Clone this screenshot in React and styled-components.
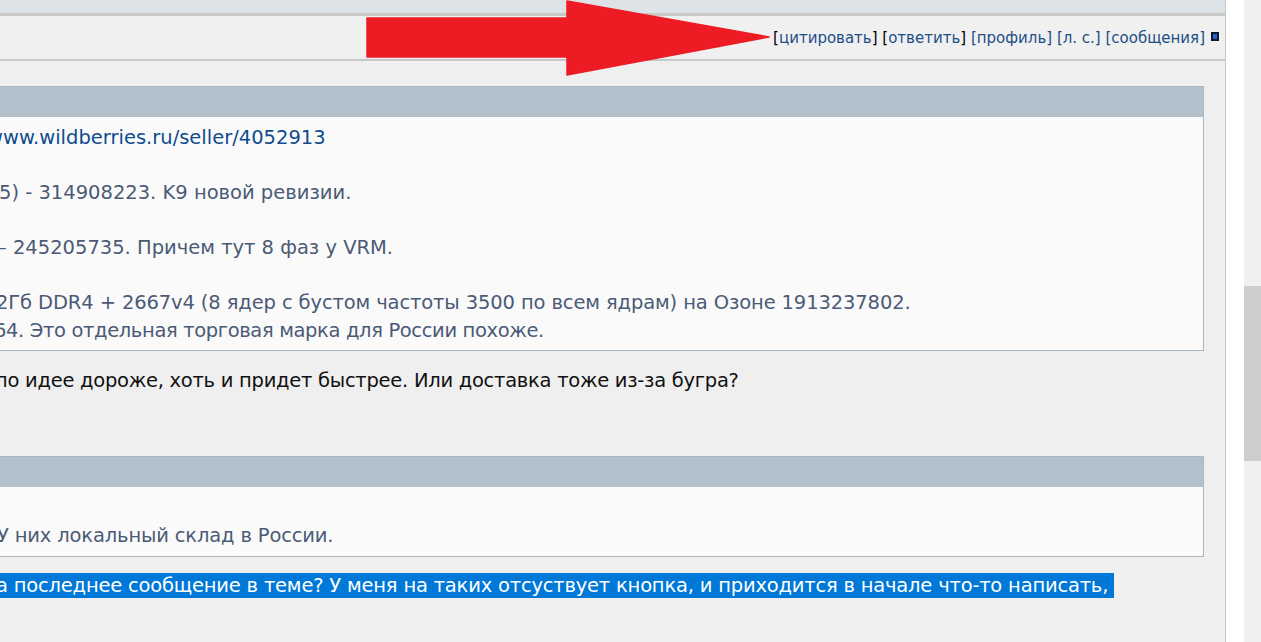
import React from "react";
import styled, { createGlobalStyle } from "styled-components";

const Global = createGlobalStyle`
  html, body { margin: 0; padding: 0; background: #ffffff; }
  body { font-family: "DejaVu Sans", Verdana, sans-serif; overflow: hidden; }
`;

const Page = styled.div`
  display: flex;
  width: 1261px;
  height: 642px;
  overflow: hidden;
`;

const Main = styled.div`
  position: relative;
  box-sizing: border-box;
  width: 1226px;
  flex: none;
  display: flex;
  flex-direction: column;
  background: #efefef;
  border-right: 1px solid #c8c8c8;
  overflow: hidden;
`;

const TopBand = styled.div`
  height: 13px;
  background: #dee3e7;
  flex: none;
`;

const ActionBar = styled.div`
  flex: none;
  box-sizing: border-box;
  height: 48px;
  background: #f0f0f0;
  border-top: 3px solid #c8c8c8;
  border-bottom: 2px solid #c8c8c8;
  display: flex;
  align-items: center;
  justify-content: flex-end;
  padding-right: 6px;
`;

const Links = styled.span`
  font-size: 15px;
  color: #000;
  white-space: pre;
`;

const ActLink = styled.span`
  color: #1d4f86;
`;

const Square = styled.span`
  display: inline-block;
  flex: none;
  box-sizing: border-box;
  width: 8px;
  height: 9px;
  margin-left: 6px;
  margin-top: -2px;
  background: #2f5fc4;
  border: 2px solid #0c1a30;
`;

const Content = styled.div`
  padding: 25px 21px 0 0;
  display: flex;
  flex-direction: column;
`;

const Quote = styled.div`
  margin-left: -40px;
  border: 1px solid #a9b7c3;
  background: #fafafa;
`;

const QuoteHead = styled.div`
  height: 30px;
  background: #b3c1cc;
`;

const QuoteBody = styled.div`
  padding: ${(p) => p.$pad};
  padding-left: 40px;
  font-size: 19.5px;
  line-height: 27.5px;
  color: #4b5a76;
  white-space: pre;
`;

const Line = styled.div`
  height: 27.5px;
  text-indent: ${(p) => p.$shift || 0}px;
  letter-spacing: ${(p) => p.$ls || 0}px;
  white-space: pre;
`;

const Link = styled.span`
  color: #0f4c8e;
`;

const Reply = styled.div`
  margin: ${(p) => p.$m};
  font-size: 19.5px;
  line-height: 28px;
  color: #111;
  white-space: pre;
  text-indent: ${(p) => p.$shift}px;
  letter-spacing: ${(p) => p.$ls || 0}px;
`;

const Selected = styled.span`
  background: #0078d7;
  color: #ffffff;
  padding: 1px 0;
`;

const Gutter = styled.div`
  width: 18px;
  flex: none;
  background: #ffffff;
`;

const Scrollbar = styled.div`
  width: 17px;
  flex: none;
  background: #f0f0f0;
  display: flex;
  flex-direction: column;
`;

const Thumb = styled.div`
  margin-top: 286px;
  height: 175px;
  background: #cdcdcd;
`;

const Arrow = styled.svg`
  position: absolute;
  left: 364px;
  top: 0;
`;

export default function App() {
  return (
    <>
      <Global />
      <Page>
        <Main>
          <TopBand />
          <ActionBar>
            <Links>
              {"["}<ActLink>цитировать</ActLink>{"] ["}<ActLink>ответить</ActLink>{"] "}
              <ActLink>[профиль]</ActLink>{" "}
              <ActLink>[л. с.]</ActLink>{" "}
              <ActLink>[сообщения]</ActLink>
            </Links>
            <Square />
          </ActionBar>
          <Content>
            <Quote>
              <QuoteHead />
              <QuoteBody $pad="7px 0 6px">
                <Line $shift={-14}><Link>www.wildberries.ru/seller/4052913</Link></Line>
                <Line />
                <Line $shift={-2}>5) - 314908223. K9 новой ревизии.</Line>
                <Line />
                <Line $shift={-4}>– 245205735. Причем тут 8 фаз у VRM.</Line>
                <Line />
                <Line $shift={-5} $ls={-0.12}>2Гб DDR4 + 2667v4 (8 ядер с бустом частоты 3500 по всем ядрам) на Озоне 1913237802.</Line>
                <Line $shift={-7} $ls={-0.36}>64. Это отдельная торговая марка для России похоже.</Line>
              </QuoteBody>
            </Quote>
            <Reply $m="16px 0 61px" $shift={-5} $ls={-0.27}>по идее дороже, хоть и придет быстрее. Или доставка тоже из-за бугра?</Reply>
            <Quote>
              <QuoteHead />
              <QuoteBody $pad="7px 0 7px">
                <Line />
                <Line $shift={-4} $ls={-0.16}>У них локальный склад в России.</Line>
              </QuoteBody>
            </Quote>
            <Reply $m="15px 0 0" $shift={-4} $ls={-0.2}>
              <Selected>а последнее сообщение в теме? У меня на таких отсуствует кнопка, и приходится в начале что-то написать, </Selected>
            </Reply>
          </Content>
          <Arrow width="410" height="78" viewBox="0 0 410 78">
            <path
              d="M3 18 L203 18 L203 1 L405 37 L203 75 L203 57 L3 57 Z"
              fill="#ed1c24"
              stroke="#ed1c24"
              strokeWidth="1.5"
              strokeLinejoin="round"
            />
          </Arrow>
        </Main>
        <Gutter />
        <Scrollbar>
          <Thumb />
        </Scrollbar>
      </Page>
    </>
  );
}
